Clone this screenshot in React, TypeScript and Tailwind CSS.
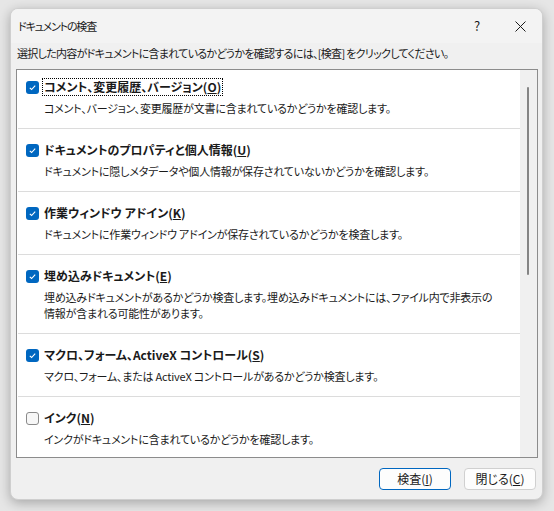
import type { ReactNode } from "react";

const font = "[font-family:'Noto_Sans_CJK_JP','Liberation_Sans',sans-serif] [font-feature-settings:'palt']";

type Item = {
  title: ReactNode;
  desc: ReactNode;
  checked: boolean;
  focused?: boolean;
};

const items: Item[] = [
  {
    title: <>コメント、変更履歴、バージョン(<u>O</u>)</>,
    desc: "コメント、バージョン、変更履歴が文書に含まれているかどうかを確認します。",
    checked: true,
    focused: true,
  },
  {
    title: <>ドキュメントのプロパティと個人情報(<u>U</u>)</>,
    desc: "ドキュメントに隠しメタデータや個人情報が保存されていないかどうかを確認します。",
    checked: true,
  },
  {
    title: <>作業ウィンドウ アドイン(<u>K</u>)</>,
    desc: "ドキュメントに作業ウィンドウ アドインが保存されているかどうかを検査します。",
    checked: true,
  },
  {
    title: <>埋め込みドキュメント(<u>E</u>)</>,
    desc: (
      <>
        埋め込みドキュメントがあるかどうか検査します。埋め込みドキュメントには、ファイル内で非表示の
        <br />
        情報が含まれる可能性があります。
      </>
    ),
    checked: true,
  },
  {
    title: <>マクロ、フォーム、ActiveX コントロール(<u>S</u>)</>,
    desc: "マクロ、フォーム、または ActiveX コントロールがあるかどうか検査します。",
    checked: true,
  },
  {
    title: <>インク(<u>N</u>)</>,
    desc: "インクがドキュメントに含まれているかどうかを確認します。",
    checked: false,
  },
];

function CheckBox({ checked }: { checked: boolean }) {
  if (!checked) {
    return <span className="block w-[13px] h-[13px] shrink-0 rounded-[3px] border border-[#8a8a8a] bg-[#f7f7f7]" />;
  }
  return (
    <span className="flex w-[13px] h-[13px] shrink-0 items-center justify-center rounded-[3px] bg-[#0067c0]">
      <svg width="9" height="9" viewBox="0 0 9 9">
        <polyline points="1.8,4.8 3.6,6.5 7.2,2.6" fill="none" stroke="#fff" strokeWidth="1.1" />
      </svg>
    </span>
  );
}

function Row({ item, first }: { item: Item; first: boolean }) {
  return (
    <div className={`ml-[1px] border-b border-[#dcdcdc] pl-[8px] pb-[12px] ${first ? "pt-[9px]" : "pt-[13px]"}`}>
      <div className="flex items-center h-[16px]">
        <CheckBox checked={item.checked} />
        <span
          className={`ml-[4px] px-[1px] text-[12px] font-bold leading-[16px] ${
            item.focused ? "outline outline-1 outline-dotted outline-black" : ""
          }`}
        >
          {item.title}
        </span>
      </div>
      <div className="mt-[5px] pl-[18px] leading-[16px] text-[11px] tracking-[-0.2px] whitespace-nowrap">{item.desc}</div>
    </div>
  );
}

export default function App() {
  return (
    <div className={`w-[554px] h-[511px] bg-[#e6e6e6] pt-[8px] pl-[10px] text-[11px] text-[#1a1a1a] ${font}`}>
      <div className="flex flex-col w-[533px] h-[492px] rounded-[8px] border border-[#cfcfcf] bg-[#f0f0f0] shadow-[0_3px_12px_rgba(0,0,0,0.28)] overflow-hidden">
        <div className="flex items-center h-[34px] shrink-0 bg-[#f3f3f3] pl-[7px]">
          <span className="flex-1 tracking-[-1.2px]">ドキュメントの検査</span>
          <span className="w-[12px] text-center text-[13px]">?</span>
          <span className="ml-[32px] mr-[16px]">
            <svg width="11" height="11" viewBox="0 0 11 11">
              <path d="M0.5 0.5 L10.5 10.5 M10.5 0.5 L0.5 10.5" stroke="#1a1a1a" strokeWidth="1" />
            </svg>
          </span>
        </div>
        <div className="mt-[2px] pl-[6px] leading-[16px] h-[16px] tracking-[-0.7px] whitespace-nowrap">
          選択した内容がドキュメントに含まれているかどうかを確認するには、[検査] をクリックしてください。
        </div>
        <div className="mt-[8px] ml-[5px] flex w-[522px] h-[389px] border border-[#8c8c8c] bg-white overflow-hidden">
          <div className="flex-1 overflow-hidden">
            {items.map((it, i) => (
              <Row key={i} item={it} first={i === 0} />
            ))}
          </div>
          <div className="w-[17px] shrink-0 bg-[#f0f0f0] pt-[17px]">
            <div className="ml-[7px] w-[2px] h-[188px] rounded-full bg-[#858585]" />
          </div>
        </div>
        <div className="mt-[10px] flex justify-end gap-[13px] pr-[6px]">
          <button className="w-[72px] h-[22px] rounded-[4px] border border-[#0067c0] bg-[#fdfdfd] leading-[20px] text-[12px]">
            検査(<u>I</u>)
          </button>
          <button className="w-[72px] h-[22px] rounded-[4px] border border-[#d0d0d0] bg-[#fdfdfd] leading-[20px] text-[12px]">
            閉じる(<u>C</u>)
          </button>
        </div>
      </div>
    </div>
  );
}
